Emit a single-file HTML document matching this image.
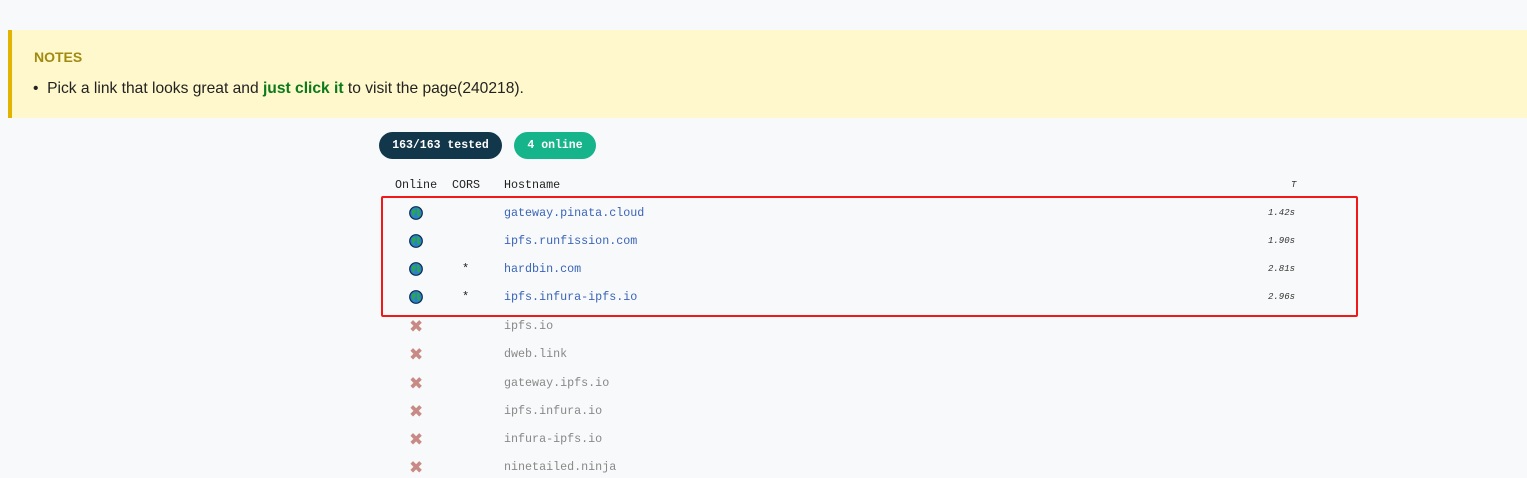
<!DOCTYPE html>
<html><head><meta charset="utf-8"><style>
body{margin:0;width:1527px;height:476px;background:#f8f9fa;overflow:hidden;position:relative;font-family:"Liberation Sans",sans-serif}
.note{position:absolute;left:8px;top:30px;width:1519px;height:88px;background:#fff8cc;border-left:4px solid #e0b400;box-sizing:border-box}
.nt{position:absolute;left:22px;top:19px;font-weight:bold;font-size:14px;color:#a08a10}
.nl{position:absolute;left:21px;top:50px;font-size:15.6px;color:#222}
.nl b{color:#0a7a1a}
.m{font-family:"Liberation Mono",monospace;position:absolute;white-space:nowrap}
.badge{position:absolute;top:132px;height:27px;line-height:27px;border-radius:14px;color:#fff;font-weight:bold;font-size:11.5px;text-align:center}
.h{top:178px;font-size:11.7px;color:#222}
.host{font-size:11.7px;color:#3a64b8}
.off{color:#888}
.t{font-size:9px;font-style:italic;color:#333}
.g{position:absolute;width:14px;height:14px}
.x{position:absolute;font-size:17px;color:#c78a85;font-weight:bold;font-family:"DejaVu Sans",sans-serif}
.box{position:absolute;left:381px;top:196px;width:977px;height:121px;border:2.5px solid #f01818;border-radius:2px;box-sizing:border-box}
</style></head><body>
<div class="note"><div class="nt">NOTES</div><div class="nl">•&nbsp; Pick a link that looks great and <b>just click it</b> to visit the page(240218).</div></div>
<div class="badge m" style="left:379px;width:123px;background:#12364a">163/163 tested</div>
<div class="badge m" style="left:514px;width:82px;background:#16b48a">4 online</div>
<div class="m h" style="left:395px">Online</div>
<div class="m h" style="left:452px">CORS</div>
<div class="m h" style="left:504px">Hostname</div>
<div class="m t" style="left:1291px;top:180px">T</div>

<svg class="g" style="left:409px;top:206px" viewBox="0 0 14 14"><circle cx="7" cy="7" r="6.3" fill="#2a7fd0" stroke="#0d2a4a" stroke-width="1.2"/><path d="M3 4 L6 3 L7 6 L5 8 L6 11 L4 10 L3 7Z M8 2 L11 4 L10 7 L12 9 L9 11 L8 8Z" fill="#2aa84a"/></svg>
<svg class="g" style="left:409px;top:234px" viewBox="0 0 14 14"><circle cx="7" cy="7" r="6.3" fill="#2a7fd0" stroke="#0d2a4a" stroke-width="1.2"/><path d="M3 4 L6 3 L7 6 L5 8 L6 11 L4 10 L3 7Z M8 2 L11 4 L10 7 L12 9 L9 11 L8 8Z" fill="#2aa84a"/></svg>
<svg class="g" style="left:409px;top:262px" viewBox="0 0 14 14"><circle cx="7" cy="7" r="6.3" fill="#2a7fd0" stroke="#0d2a4a" stroke-width="1.2"/><path d="M3 4 L6 3 L7 6 L5 8 L6 11 L4 10 L3 7Z M8 2 L11 4 L10 7 L12 9 L9 11 L8 8Z" fill="#2aa84a"/></svg>
<svg class="g" style="left:409px;top:290px" viewBox="0 0 14 14"><circle cx="7" cy="7" r="6.3" fill="#2a7fd0" stroke="#0d2a4a" stroke-width="1.2"/><path d="M3 4 L6 3 L7 6 L5 8 L6 11 L4 10 L3 7Z M8 2 L11 4 L10 7 L12 9 L9 11 L8 8Z" fill="#2aa84a"/></svg>

<div class="m host" style="left:504px;top:206px">gateway.pinata.cloud</div>
<div class="m host" style="left:504px;top:234px">ipfs.runfission.com</div>
<div class="m host" style="left:504px;top:262px">hardbin.com</div>
<div class="m host" style="left:504px;top:290px">ipfs.infura-ipfs.io</div>
<div class="m" style="left:462px;top:262px;font-size:12px;color:#222">*</div>
<div class="m" style="left:462px;top:290px;font-size:12px;color:#222">*</div>
<div class="m t" style="left:1268px;top:208px">1.42s</div>
<div class="m t" style="left:1268px;top:236px">1.90s</div>
<div class="m t" style="left:1268px;top:264px">2.81s</div>
<div class="m t" style="left:1268px;top:292px">2.96s</div>

<div class="x" style="left:409px;top:317px">✖</div>
<div class="x" style="left:409px;top:345px">✖</div>
<div class="x" style="left:409px;top:374px">✖</div>
<div class="x" style="left:409px;top:402px">✖</div>
<div class="x" style="left:409px;top:430px">✖</div>
<div class="x" style="left:409px;top:458px">✖</div>
<div class="m host off" style="left:504px;top:319px">ipfs.io</div>
<div class="m host off" style="left:504px;top:347px">dweb.link</div>
<div class="m host off" style="left:504px;top:376px">gateway.ipfs.io</div>
<div class="m host off" style="left:504px;top:404px">ipfs.infura.io</div>
<div class="m host off" style="left:504px;top:432px">infura-ipfs.io</div>
<div class="m host off" style="left:504px;top:460px">ninetailed.ninja</div>
<div class="box"></div>
</body></html>
